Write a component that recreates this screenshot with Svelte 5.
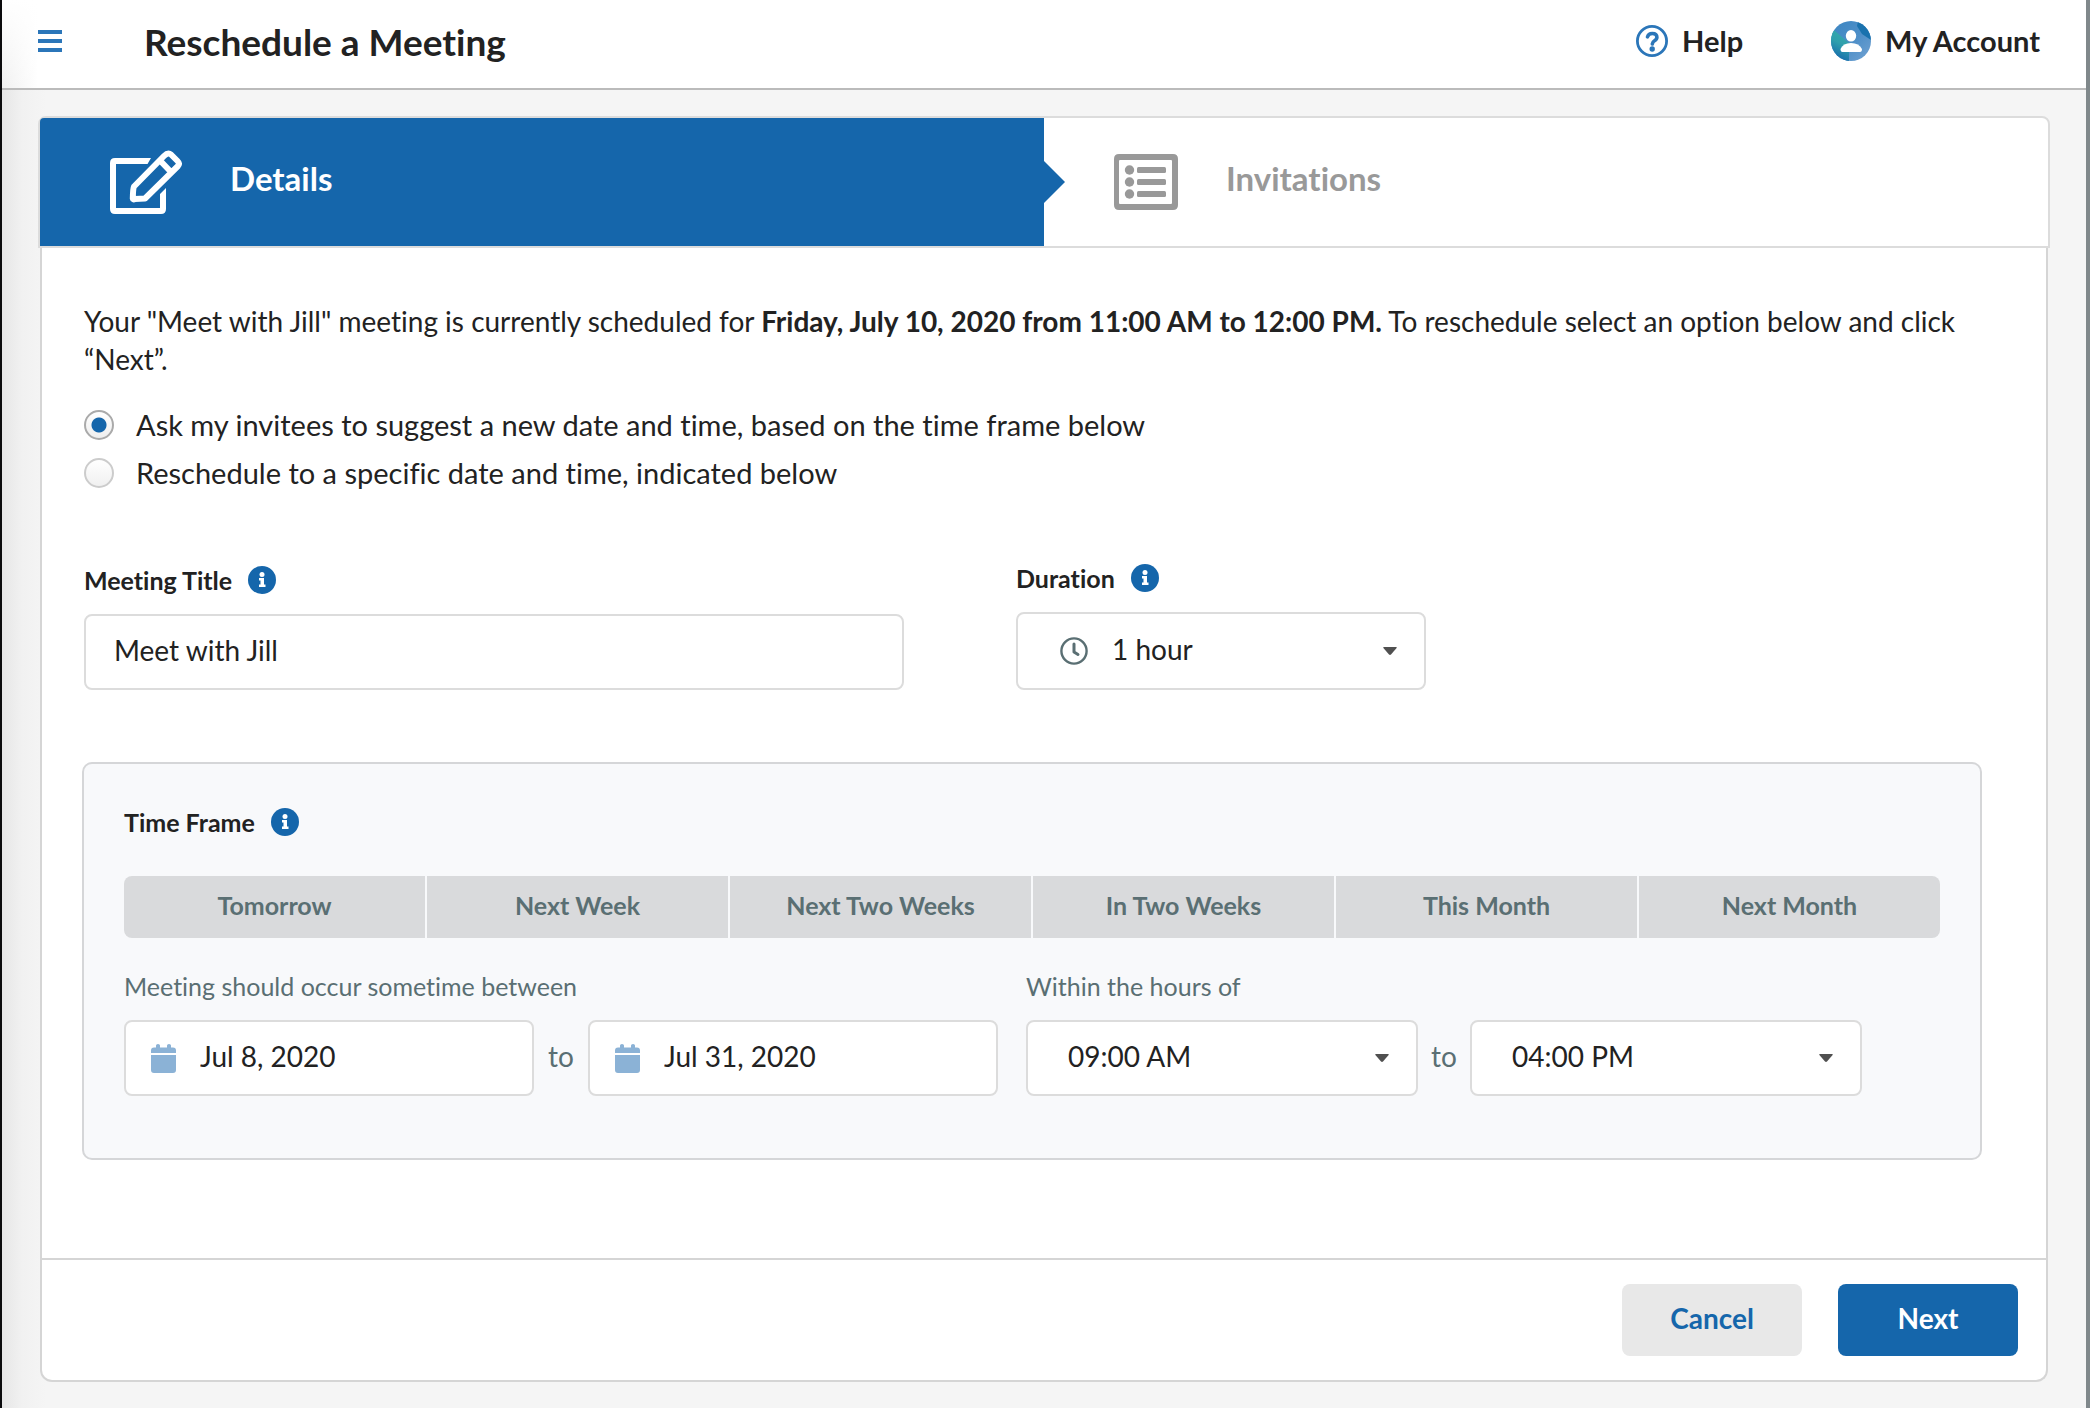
<script>
  const presets = ['Tomorrow', 'Next Week', 'Next Two Weeks', 'In Two Weeks', 'This Month', 'Next Month'];
  let mode = $state('suggest');
  let title = $state('Meet with Jill');
  let duration = $state('1 hour');
  let startDate = $state('Jul 8, 2020');
  let endDate = $state('Jul 31, 2020');
  let startTime = $state('09:00 AM');
  let endTime = $state('04:00 PM');
</script>

{#snippet info(label)}
  <button type="button" class="info" aria-label={label}>
    <svg viewBox="0 0 28 28" aria-hidden="true">
      <circle cx="14" cy="14" r="14" fill="#1566ab" />
      <circle cx="14" cy="8.500" r="2.500" fill="#fff" />
      <path d="M11 12h5v6.500h1.500v2.500h-6.500v-2.500h1.500v-4h-1.500z" fill="#fff" />
    </svg>
  </button>
{/snippet}

{#snippet caret()}
  <svg class="caret" viewBox="0 0 14 8" aria-hidden="true"><path d="M1 0h12q1.200.2.600 1L8 7.500q-1 .8-2 0L.4 1Q-.2.200 1 0z" fill="#505050" /></svg>
{/snippet}

{#snippet calendar()}
  <svg class="calendar" viewBox="0 0 25 29" aria-hidden="true">
    <path d="M3 3.500h2V1.500Q5 0 7 0t2 1.500v2h7v-2Q16 0 18 0t2 1.500v2h2q3 0 3 3V9H0V6.500q0-3 3-3zM0 11h25v15q0 3-3 3H3q-3 0-3-3z" fill="#8bb2d6" />
  </svg>
{/snippet}

<div class="shell">
  <header>
    <button type="button" class="menu" aria-label="Menu">
      <svg viewBox="0 0 24 22" aria-hidden="true"><path d="M0 2h24M0 11h24M0 20h24" stroke="#2b76b9" stroke-width="4" /></svg>
    </button>
    <h1>Reschedule a Meeting</h1>
    <nav>
      <a href="#help">
        <svg class="help-icon" viewBox="0 0 32 32" fill="none" aria-hidden="true">
          <circle cx="16" cy="16" r="14.600" stroke="#2b76b9" stroke-width="2.800" />
          <path d="M11.500 11.800q.8-3.300 4.800-3.300 4.600 0 4.600 3.800 0 2-2.400 3.400-2 1.200-2.200 3.300" stroke="#2b76b9" stroke-width="3.600" stroke-linecap="round" />
          <circle cx="16.200" cy="24" r="2.700" fill="#2b76b9" />
        </svg>
        <span>Help</span>
      </a>
      <a href="#account">
        <svg class="avatar" viewBox="0 0 40 40" aria-hidden="true">
          <defs>
            <linearGradient id="ring" x1="0" y1="0" x2="1" y2="1">
              <stop offset="0" stop-color="#3b86c2" /><stop offset=".55" stop-color="#4f8fc8" /><stop offset="1" stop-color="#72a3d2" />
            </linearGradient>
            <linearGradient id="teal" x1=".7" y1="0" x2=".4" y2="1">
              <stop offset="0" stop-color="#36aaaa" /><stop offset=".45" stop-color="#2f9fad" /><stop offset="1" stop-color="#1566ab" />
            </linearGradient>
            <clipPath id="disc"><circle cx="20" cy="20" r="20" /></clipPath>
          </defs>
          <g clip-path="url(#disc)">
            <path d="M0 0h40v40H0z" fill="url(#ring)" />
            <path d="M0 9l4 1 14 12v18H0z" fill="url(#teal)" />
            <path d="M27 0l-1 5 5 8 9 6V0z" fill="#1a72ae" />
            <ellipse cx="20" cy="14.800" rx="5.200" ry="5.800" fill="#fff" />
            <path d="M9.500 28Q12 22 20 22t11 6q0 3-2 3H11.500q-2 0-2-3z" fill="#fff" />
          </g>
        </svg>
        <span>My Account</span>
      </a>
    </nav>
  </header>

  <main>
    <ol class="steps">
      <li class="active" aria-current="step">
        <svg class="edit-icon" viewBox="0 0 72 64" fill="none" stroke="#fff" stroke-width="6" stroke-linejoin="round" aria-hidden="true">
          <path d="M37.500 14L41 8H5Q0 8 0 13v46q0 5 5 5h46q5 0 5-5V38l-6 6v14H6V14z" fill="#fff" stroke="none" />
          <path d="M54 6l-30 30.500q-1 2-1.200 12Q23 50 25 49l10-.5L68 16q2-2.500-.5-5L61 4.500Q58 2 54 6zM50 10.500l11 11.500" />
        </svg>
        <span>Details</span>
      </li>
      <li>
        <svg class="list-icon" viewBox="0 0 64 56" fill="#999" aria-hidden="true">
          <path fill-rule="evenodd" d="M5 0h54q5 0 5 5v46q0 5-5 5H5q-5 0-5-5V5q0-5 5-5zm1 6q-1 0-1 1v42q0 1 1 1h51q1 0 1-1V7q0-1-1-1z" />
          <circle cx="15.500" cy="16" r="4.700" /><circle cx="15.500" cy="28" r="4.700" /><circle cx="15.500" cy="40" r="4.700" />
          <rect x="23" y="13" width="29" height="6" rx="1.500" /><rect x="23" y="25" width="29" height="6" rx="1.500" /><rect x="23" y="37" width="29" height="6" rx="1.500" />
        </svg>
        <span>Invitations</span>
      </li>
    </ol>

    <form class="panel" onsubmit={(e) => e.preventDefault()}>
      <div class="content">
        <p>Your "Meet with Jill" meeting is currently scheduled for <strong>Friday, July 10, 2020 from 11:00 AM to 12:00 PM.</strong> To reschedule select an option below and click “Next”.</p>

        <div class="options">
          <label><input type="radio" name="mode" value="suggest" bind:group={mode} /><span>Ask my invitees to suggest a new date and time, based on the time frame below</span></label>
          <label><input type="radio" name="mode" value="specific" bind:group={mode} /><span>Reschedule to a specific date and time, indicated below</span></label>
        </div>

        <div class="basics">
          <div>
            <div class="heading"><label for="title">Meeting Title</label>{@render info('About the meeting title')}</div>
            <input id="title" class="box" type="text" bind:value={title} />
          </div>
          <div>
            <div class="heading"><label for="duration">Duration</label>{@render info('About the duration')}</div>
            <div class="field tall">
              <select id="duration" class="box with-clock" bind:value={duration}>
                <option>30 minutes</option><option>1 hour</option><option>2 hours</option>
              </select>
              <svg class="clock" viewBox="0 0 28 28" fill="none" stroke="#5a6f73" aria-hidden="true">
                <circle cx="14" cy="14" r="12.600" stroke-width="2.400" />
                <path d="M14 7v8l4 2.500" stroke-width="3" stroke-linecap="round" stroke-linejoin="round" />
              </svg>
              {@render caret()}
            </div>
          </div>
        </div>

        <section class="timeframe">
          <div class="heading"><h2>Time Frame</h2>{@render info('About the time frame')}</div>
          <div class="presets">
            {#each presets as preset}
              <button type="button">{preset}</button>
            {/each}
          </div>
          <div class="ranges">
            <fieldset class="dates">
              <legend>Meeting should occur sometime between</legend>
              <div class="range">
                <div class="field">
                  <input class="box with-calendar" type="text" aria-label="Start date" bind:value={startDate} />
                  {@render calendar()}
                </div>
                <span>to</span>
                <div class="field">
                  <input class="box with-calendar" type="text" aria-label="End date" bind:value={endDate} />
                  {@render calendar()}
                </div>
              </div>
            </fieldset>
            <fieldset class="hours">
              <legend>Within the hours of</legend>
              <div class="range">
                <div class="field">
                  <select class="box time" aria-label="Start time" bind:value={startTime}>
                    <option>08:00 AM</option><option>09:00 AM</option><option>10:00 AM</option>
                  </select>
                  {@render caret()}
                </div>
                <span>to</span>
                <div class="field">
                  <select class="box time" aria-label="End time" bind:value={endTime}>
                    <option>03:00 PM</option><option>04:00 PM</option><option>05:00 PM</option>
                  </select>
                  {@render caret()}
                </div>
              </div>
            </fieldset>
          </div>
        </section>
      </div>

      <footer>
        <button type="button" class="cancel">Cancel</button>
        <button type="submit" class="next">Next</button>
      </footer>
    </form>
  </main>
</div>

<style>
  :global(body) {
    background: #f5f5f5;
  }
  .shell,
  .shell :global(*) {
    box-sizing: border-box;
  }
  .shell {
    min-height: 100vh;
    border-left: 2px solid #0b0b0d;
    border-right: 4px solid #80888b;
    background: linear-gradient(90deg, #e6e6e6, #f1f1f1 20px, #f5f5f5 44px);
    color: #222;
    font-family: Lato, 'Open Sans', sans-serif;
    font-size: 28px;
    font-variant-ligatures: no-common-ligatures;
  }
  button,
  input,
  select {
    font: inherit;
    color: inherit;
  }
  button {
    border: 0;
    padding: 0;
    cursor: pointer;
  }
  svg {
    display: block;
    flex: none;
  }
  h1,
  h2,
  p,
  ol,
  fieldset {
    margin: 0;
    padding: 0;
  }
  fieldset {
    border: 0;
    min-width: 0;
  }

  header {
    display: flex;
    align-items: center;
    height: 90px;
    padding: 0 46px 6px 36px;
    border-bottom: 2px solid #bbb;
    background: linear-gradient(180deg, #fff, transparent), linear-gradient(90deg, #f0f0f0, #fff 36px);
  }
  .menu {
    background: none;
  }
  .menu svg {
    width: 24px;
    height: 22px;
  }
  h1 {
    margin-left: 82px;
    font-size: 37px;
    font-weight: 700;
  }
  nav {
    display: flex;
    gap: 88px;
    margin-left: auto;
  }
  nav a {
    display: flex;
    align-items: center;
    gap: 14px;
    color: inherit;
    font-size: 29px;
    font-weight: 700;
    text-decoration: none;
  }
  nav span {
    padding-bottom: 2px;
  }
  .help-icon {
    width: 32px;
    height: 32px;
  }
  .avatar {
    width: 40px;
    height: 40px;
  }

  main {
    padding: 26px 36px;
  }
  .steps {
    display: grid;
    grid-template-columns: 1fr 1fr;
    border: 2px solid #dcdcdc;
    border-radius: 8px 8px 0 0;
    background: #fff;
    list-style: none;
  }
  .steps li {
    display: flex;
    align-items: center;
    gap: 48px;
    height: 128px;
    padding-left: 70px;
    color: #999;
    font-size: 33px;
    font-weight: 700;
  }
  .steps span {
    padding-bottom: 8px;
  }
  .steps .active {
    position: relative;
    border-radius: 4px 0 0 0;
    background: #1566ab;
    color: #fff;
  }
  .steps .active::after {
    content: '';
    position: absolute;
    top: 43px;
    left: 100%;
    border: 21px solid transparent;
    border-left-color: #1566ab;
    border-right: 0;
  }
  .edit-icon {
    width: 72px;
    height: 64px;
  }
  .list-icon {
    width: 64px;
    height: 56px;
  }

  .panel {
    margin: 0 2px;
    border: 2px solid #d5d5d5;
    border-top: 0;
    border-radius: 0 0 12px 12px;
    background: #fff;
  }
  .content {
    padding: 54px 40px 98px 42px;
  }
  p {
    line-height: 38px;
  }
  .options {
    display: grid;
    margin-top: 23px;
    font-size: 29px;
  }
  .options label {
    display: flex;
    align-items: center;
    gap: 22px;
    height: 48px;
  }
  .options span {
    padding-bottom: 2px;
  }
  .options input {
    appearance: none;
    width: 30px;
    height: 30px;
    margin: 0;
    border: 2px solid #ccc;
    border-radius: 50%;
    background: linear-gradient(#fff, #f0f0f0);
  }
  .options input:checked {
    border-color: #aaa;
    background: radial-gradient(circle, #1566ab 7px, transparent 8px), linear-gradient(#fff, #eee);
  }

  .basics {
    display: grid;
    grid-template-columns: minmax(0, 820px) minmax(0, 410px);
    gap: 112px;
    align-items: end;
    margin-top: 67px;
  }
  .heading {
    display: flex;
    align-items: center;
    gap: 16px;
    font-size: 25px;
    font-weight: 700;
    line-height: 28px;
  }
  .basics .heading {
    margin-bottom: 20px;
  }
  h2 {
    font-size: 25px;
    font-weight: 700;
  }
  .info {
    background: none;
  }
  .info svg {
    width: 28px;
    height: 28px;
  }
  .box {
    display: block;
    width: 100%;
    height: 76px;
    margin: 0;
    padding: 0 28px 4px;
    border: 2px solid #dcdcdc;
    border-radius: 8px;
    background: #fff;
    appearance: none;
  }
  .field {
    display: grid;
    flex: 1;
    align-items: center;
  }
  .field > :global(*) {
    grid-area: 1 / 1;
  }
  .field svg {
    pointer-events: none;
  }
  .tall .box {
    height: 78px;
  }
  .box.with-clock {
    padding-left: 94px;
  }
  .box.with-calendar {
    padding-left: 74px;
  }
  .box.time {
    padding-left: 40px;
  }
  .clock {
    width: 28px;
    height: 28px;
    margin-left: 44px;
  }
  .calendar {
    width: 25px;
    height: 29px;
    margin-left: 27px;
  }
  .caret {
    justify-self: end;
    width: 14px;
    height: 8px;
    margin-right: 29px;
  }

  .timeframe {
    margin: 72px 24px 0 -2px;
    padding: 44px 40px 62px;
    border: 2px solid #d5d6d8;
    border-radius: 10px;
    background: #f8f9fb;
  }
  .presets {
    display: grid;
    grid-template-columns: repeat(6, 1fr);
    gap: 2px;
    margin-top: 40px;
    border-radius: 8px;
    overflow: hidden;
  }
  .presets button {
    height: 62px;
    padding-bottom: 4px;
    background: #d9dadc;
    color: #5a6f73;
    font-size: 25px;
    font-weight: 700;
  }
  .ranges {
    display: flex;
    gap: 28px;
    margin: 32px 78px 0 0;
    color: #5a6f73;
  }
  .dates {
    flex: 874 1 0;
  }
  .hours {
    flex: 836 1 0;
  }
  legend {
    margin-bottom: 18px;
    padding: 0;
    font-size: 25px;
    line-height: 32px;
  }
  .range {
    display: flex;
    align-items: center;
  }
  .range > span {
    width: 54px;
    padding-bottom: 4px;
    text-align: center;
  }
  .hours .range > span {
    width: 52px;
  }
  .range .box {
    color: #222;
  }

  footer {
    display: flex;
    justify-content: flex-end;
    gap: 36px;
    padding: 24px 28px;
    border-top: 2px solid #d5d5d5;
  }
  footer button {
    width: 180px;
    height: 72px;
    padding-bottom: 4px;
    border-radius: 8px;
    font-weight: 700;
  }
  .cancel {
    background: #e8e8e8;
    color: #1566ab;
  }
  .next {
    background: #1566ab;
    color: #fff;
  }
</style>
